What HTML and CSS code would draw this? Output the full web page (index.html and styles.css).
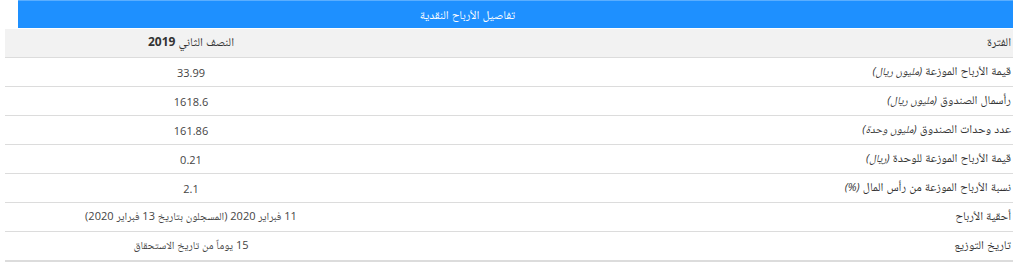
FILE: index.html
```html
<!DOCTYPE html>
<html lang="ar" dir="rtl">
<head>
<meta charset="utf-8">
<link rel="stylesheet" href="styles.css">
</head>
<body>
<div class="panel">
  <div class="title">تفاصيل الأرباح النقدية</div>
  <table class="grid">
    <thead>
      <tr><th class="label">الفترة</th><th class="value">النصف الثاني <b>2019</b></th></tr>
    </thead>
    <tbody>
      <tr><td class="label">قيمة الأرباح الموزعة <em>(مليون ريال)</em></td><td class="value">33.99</td></tr>
      <tr><td class="label">رأسمال الصندوق <em>(مليون ريال)</em></td><td class="value">1618.6</td></tr>
      <tr><td class="label">عدد وحدات الصندوق <em>(مليون وحدة)</em></td><td class="value">161.86</td></tr>
      <tr><td class="label">قيمة الأرباح الموزعة للوحدة <em>(ريال)</em></td><td class="value">0.21</td></tr>
      <tr><td class="label">نسبة الأرباح الموزعة من رأس المال <em>(%)</em></td><td class="value">2.1</td></tr>
      <tr><td class="label">أحقية الأرباح</td><td class="value">11 فبراير 2020 (المسجلون بتاريخ 13 فبراير 2020)</td></tr>
      <tr><td class="label">تاريخ التوزيع</td><td class="value">15 يوماً من تاريخ الاستحقاق</td></tr>
    </tbody>
  </table>
</div>
</body>
</html>
```

FILE: styles.css
```css
html, body {
  margin: 0;
  padding: 0;
  background: #fff;
}
body {
  font-family: "Open Sans", "Noto Naskh Arabic", "Noto Sans Arabic", "DejaVu Sans", sans-serif;
  font-size: 12px;
  color: #333;
}
.panel {
  width: 995px;
}
.title {
  height: 28px;
  background: #1e90ff;
  border-top: 1px solid #5aaeff;
  box-sizing: border-box;
  color: #fff;
  font-size: 12px;
  line-height: 27px;
  text-align: center;
  padding-right: 96px;
}
.grid {
  width: 1008px;
  border-collapse: collapse;
  margin-top: 1px;
}
.grid th, .grid td {
  height: 28px;
  padding: 0 2px;
  border-bottom: 1px solid #dcdcdc;
  font-weight: normal;
  vertical-align: middle;
}
.grid thead th {
  background: #f2f2f2;
}
.grid th b {
  font-weight: bold;
}
.grid .label {
  text-align: right;
  width: 632px;
}
.grid .value {
  text-align: center;
  width: 368px;
}
.grid td.value {
  font-size: 11px;
  color: #444;
}
.grid em {
  font-style: italic;
  font-size: 11px;
}
.grid tbody tr:last-child td {
  border-bottom: 2px solid #dcdcdc;
}
```
